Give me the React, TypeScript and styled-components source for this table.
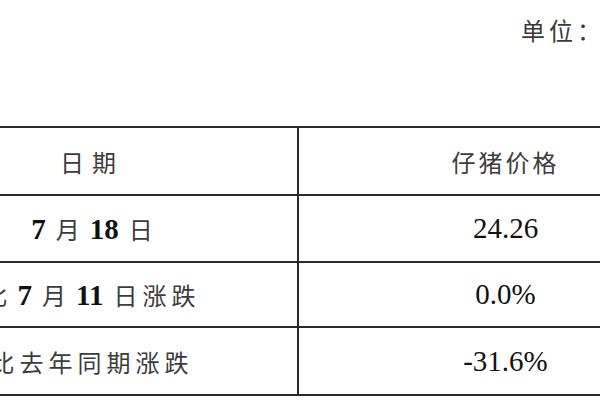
import React from "react";
import styled, { createGlobalStyle } from "styled-components";

const Global = createGlobalStyle`
  html, body { margin: 0; padding: 0; background: #ffffff; overflow: hidden; }
  #root { width: 600px; height: 400px; }
`;

const cjk = `"Noto Sans CJK SC", "Noto Sans CJK JP", sans-serif`;
const latin = `"Liberation Serif", "Noto Sans CJK SC", serif`;

const Page = styled.div`
  width: 600px;
  height: 400px;
  overflow: hidden;
  background: #fff;
  display: flex;
  flex-direction: column;
`;

const Header = styled.div`
  height: 126px;
  box-sizing: border-box;
  padding: 12px 0 0 521px;
  white-space: nowrap;
`;

const Unit = styled.span`
  font-family: ${cjk};
  font-size: 24px;
  letter-spacing: 4px;
  color: #3a3a3a;
`;

const Table = styled.table`
  margin-left: -113px;
  width: 825px;
  border-collapse: collapse;
  table-layout: fixed;
  border-top: 2px solid #2a2a2a;
`;

const Row = styled.tr<{ $h: number }>`
  height: ${(p) => p.$h}px;
  border-bottom: 2px solid #2a2a2a;
`;

const Cell = styled.td<{ $left?: boolean }>`
  padding: 0;
  text-align: center;
  vertical-align: middle;
  white-space: nowrap;
  border-right: ${(p) => (p.$left ? "2px solid #2a2a2a" : "none")};
  box-sizing: border-box;
`;

const Cjk = styled.span<{ $sp?: number }>`
  font-family: ${cjk};
  font-size: 24px;
  letter-spacing: ${(p) => p.$sp ?? 5}px;
  color: #3c3c3c;
`;

const Num = styled.span<{ $bold?: boolean }>`
  font-family: ${latin};
  font-size: 29px;
  font-weight: ${(p) => (p.$bold ? 700 : 400)};
  color: #111;
  letter-spacing: 0;
`;

const Gap = styled.span`
  display: inline-block;
  width: 10px;
`;

export default function App() {
  return (
    <Page>
      <Global />
      <Header>
        <Unit>单位：元/公斤</Unit>
      </Header>
      <Table>
        <colgroup>
          <col style={{ width: 411 }} />
          <col style={{ width: 414 }} />
        </colgroup>
        <tbody>
          <Row $h={68}>
            <Cell $left>
              <Cjk $sp={8}>日期</Cjk>
            </Cell>
            <Cell>
              <Cjk $sp={3}>仔猪价格</Cjk>
            </Cell>
          </Row>
          <Row $h={67}>
            <Cell $left>
              <Num $bold>7</Num>
              <Gap />
              <Cjk $sp={0}>月</Cjk>
              <Gap />
              <Num $bold>18</Num>
              <Gap />
              <Cjk $sp={0}>日</Cjk>
            </Cell>
            <Cell>
              <Num>24.26</Num>
            </Cell>
          </Row>
          <Row $h={65}>
            <Cell $left>
              <Cjk $sp={0}>比</Cjk>
              <Gap />
              <Num $bold>7</Num>
              <Gap />
              <Cjk $sp={0}>月</Cjk>
              <Gap />
              <Num $bold>11</Num>
              <Gap />
              <Cjk $sp={5}>日涨跌</Cjk>
            </Cell>
            <Cell>
              <Num>0.0%</Num>
            </Cell>
          </Row>
          <Row $h={68}>
            <Cell $left>
              <Cjk $sp={5}>比去年同期涨跌</Cjk>
            </Cell>
            <Cell>
              <Num>-31.6%</Num>
            </Cell>
          </Row>
        </tbody>
      </Table>
    </Page>
  );
}
